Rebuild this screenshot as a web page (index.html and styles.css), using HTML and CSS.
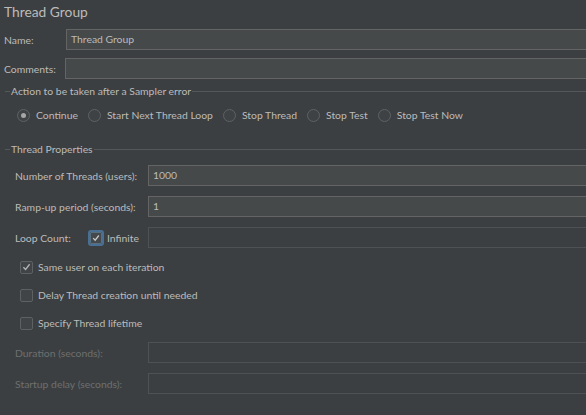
FILE: index.html
```html
<!DOCTYPE html>
<html>
<head>
<meta charset="utf-8">
<link rel="stylesheet" href="styles.css">
</head>
<body>
<div class="panel">
  <div class="title">Thread Group</div>
  <div class="row top-row">
    <span class="lbl name-lbl">Name:</span>
    <div class="field field-name">Thread Group</div>
  </div>
  <div class="row top-row comments">
    <span class="lbl comm-lbl">Comments:</span>
    <div class="field field-comm"></div>
  </div>

  <div class="group-title g1">
    <span class="gl-start"></span><span class="gt-text">Action to be taken after a Sampler error</span><span class="gl-end"></span>
  </div>
  <div class="radios">
    <span class="radio on"></span><span class="rtext">Continue</span>
    <span class="radio"></span><span class="rtext">Start Next Thread Loop</span>
    <span class="radio"></span><span class="rtext">Stop Thread</span>
    <span class="radio"></span><span class="rtext">Stop Test</span>
    <span class="radio"></span><span class="rtext">Stop Test Now</span>
  </div>

  <div class="group-title g2">
    <span class="gl-start"></span><span class="gt-text">Thread Properties</span><span class="gl-end"></span>
  </div>

  <div class="props">
    <div class="row prop">
      <span class="lbl plbl">Number of Threads (users):</span>
      <div class="field">1000</div>
    </div>
    <div class="row prop">
      <span class="lbl plbl">Ramp-up period (seconds):</span>
      <div class="field">1</div>
    </div>
    <div class="row prop">
      <span class="lbl loop-lbl">Loop Count:</span>
      <span class="focus-ring"><span class="cb checked"><svg viewBox="0 0 12 12" width="12" height="12"><path d="M2.6 6.2 L5 8.7 L9.4 3" fill="none" stroke="#c8c8c8" stroke-width="1.5"/></svg></span></span>
      <span class="inf">Infinite</span>
      <div class="field disabled"></div>
    </div>

    <div class="cbrow first">
      <span class="cb checked"><svg viewBox="0 0 12 12" width="12" height="12"><path d="M2.6 6.2 L5 8.7 L9.4 3" fill="none" stroke="#b5b5b5" stroke-width="1.4"/></svg></span>
      <span class="cbtext">Same user on each iteration</span>
    </div>
    <div class="cbrow">
      <span class="cb"></span>
      <span class="cbtext">Delay Thread creation until needed</span>
    </div>
    <div class="cbrow">
      <span class="cb"></span>
      <span class="cbtext">Specify Thread lifetime</span>
    </div>

    <div class="row prop dur">
      <span class="lbl plbl dis">Duration (seconds):</span>
      <div class="field disabled"></div>
    </div>
    <div class="row prop">
      <span class="lbl plbl dis">Startup delay (seconds):</span>
      <div class="field disabled"></div>
    </div>
  </div>
</div>
</body>
</html>
```
FILE: styles.css
```css
html, body {
  margin: 0;
  padding: 0;
  background: #3c3f41;
  overflow: hidden;
}
body {
  width: 586px;
  height: 415px;
  font-family: Lato, "Open Sans", sans-serif;
  font-size: 10.4px;
  color: #bbbbbb;
}
.panel {
  display: flex;
  flex-direction: column;
  width: 600px;
}
.title {
  height: 29px;
  line-height: 24px;
  font-size: 13.8px;
  padding-left: 4px;
  color: #bbbbbb;
}
.row {
  display: flex;
  align-items: center;
  height: 21px;
}
.lbl, .rtext, .cbtext, .inf, .gt-text {
  white-space: nowrap;
  flex-shrink: 0;
}
.top-row .lbl {
  padding-left: 4px;
  box-sizing: border-box;
}
.name-lbl { width: 66px; }
.comm-lbl { width: 65px; }
.comments { margin-top: 8px; }
.field {
  flex: 1;
  height: 19px;
  border: 1px solid #646464;
  background: #45494a;
  line-height: 19px;
  padding-left: 4px;
  color: #bbbbbb;
  box-sizing: content-box;
}
.field.disabled {
  background: #3c3f41;
  border-color: #4f5254;
}
.group-title {
  display: flex;
  align-items: center;
  height: 14px;
}
.g1 { margin-top: 5px; }
.g2 { margin-top: 16px; }
.gl-start {
  margin-left: 5px;
  width: 5px;
  border-top: 1px solid #555859;
}
.gl-end {
  flex: 1;
  border-top: 1px solid #555859;
}
.gt-text {
  padding: 0 1px;
}
.radios {
  display: flex;
  align-items: center;
  height: 22px;
  margin-top: 6px;
  padding-left: 17px;
}
.radio {
  width: 11px;
  height: 11px;
  border: 1px solid #5f6264;
  border-radius: 50%;
  background: #3e4244;
  margin-right: 6px;
  position: relative;
  flex-shrink: 0;
}
.radio.on::after {
  content: "";
  position: absolute;
  left: 3px;
  top: 3px;
  width: 5px;
  height: 5px;
  border-radius: 50%;
  background: #a6a6a6;
}
.rtext { margin-right: 10px; }
.props {
  display: flex;
  flex-direction: column;
  margin-top: 9px;
}
.prop { margin-bottom: 10px; }
.plbl {
  padding-left: 15px;
  width: 148px;
  box-sizing: border-box;
}
.loop-lbl {
  padding-left: 15px;
  width: 88px;
  box-sizing: border-box;
}
.focus-ring {
  width: 12px;
  height: 12px;
  border: 2px solid #4a6f95;
  border-radius: 3px;
  display: flex;
  align-items: center;
  justify-content: center;
  flex-shrink: 0;
}
.focus-ring .cb {
  width: 10px;
  height: 10px;
  border: 1px solid #56707f;
  border-radius: 1px;
  background: #46494b;
}
.inf {
  margin-left: 3px;
  width: 41px;
}
.cb {
  width: 11px;
  height: 11px;
  border: 1px solid #5e6162;
  border-radius: 2px;
  background: #404446;
  display: flex;
  align-items: center;
  justify-content: center;
  flex-shrink: 0;
}
.cb svg { display: block; }
.cbrow {
  display: flex;
  align-items: center;
  height: 28px;
  padding-left: 20px;
}
.cbrow.first { margin-top: -5px; }
.cbtext { margin-left: 5px; }
.dur { margin-top: 5px; }
.dis { color: #6d6f70; }
```
